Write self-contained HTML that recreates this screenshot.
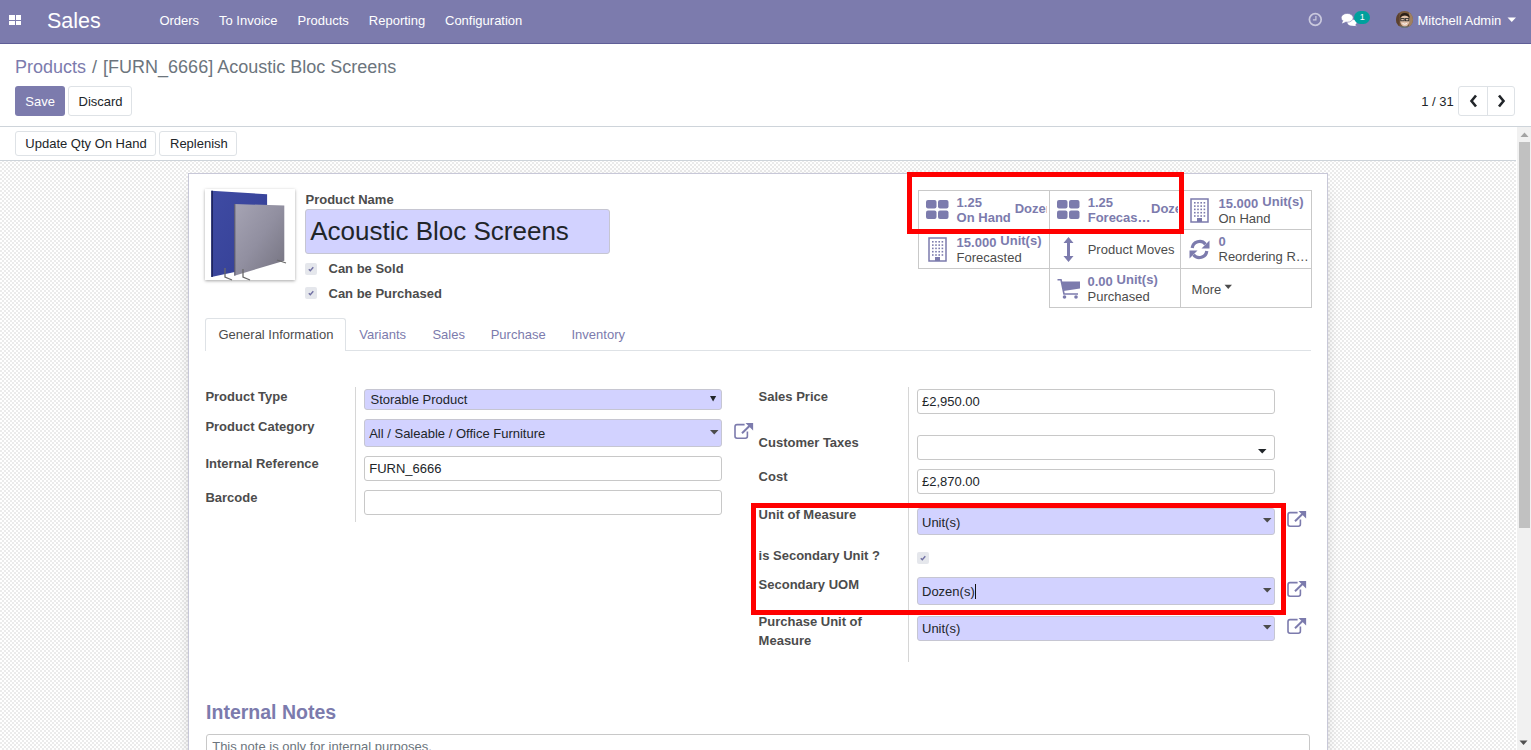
<!DOCTYPE html>
<html><head><meta charset="utf-8"><style>
html,body{margin:0;padding:0;width:1531px;height:750px;overflow:hidden;background:#fff;}
body{position:relative;font-family:"Liberation Sans",sans-serif;}
.t{position:absolute;white-space:pre;}
.r{position:absolute;}
svg.r{overflow:visible;}
</style></head><body>
<div class="r" style="left:0px;top:0px;width:1531px;height:43px;background:#7C7BAD;"></div>
<div class="r" style="left:0px;top:43px;width:1531px;height:1px;background:#5f5e97;"></div>
<div class="r" style="left:9px;top:15px;width:5.5px;height:4.5px;background:#fff;"></div>
<div class="r" style="left:15.5px;top:15px;width:5.5px;height:4.5px;background:#fff;"></div>
<div class="r" style="left:9px;top:20.5px;width:5.5px;height:4.5px;background:#fff;"></div>
<div class="r" style="left:15.5px;top:20.5px;width:5.5px;height:4.5px;background:#fff;"></div>
<div class="t" style="left:47px;top:8.15px;font-size:21.5px;line-height:26px;font-weight:400;color:#fff;">Sales</div>
<div class="t" style="left:159.4px;top:13.09px;font-size:13px;line-height:16px;font-weight:400;color:#fff;">Orders</div>
<div class="t" style="left:219px;top:13.09px;font-size:13px;line-height:16px;font-weight:400;color:#fff;">To Invoice</div>
<div class="t" style="left:297.5px;top:13.09px;font-size:13px;line-height:16px;font-weight:400;color:#fff;">Products</div>
<div class="t" style="left:368.8px;top:13.09px;font-size:13px;line-height:16px;font-weight:400;color:#fff;">Reporting</div>
<div class="t" style="left:445px;top:13.09px;font-size:13px;line-height:16px;font-weight:400;color:#fff;">Configuration</div>
<svg class="r" style="left:1307px;top:11px" width="17" height="17" viewBox="0 0 17 17"><circle cx="8.3" cy="8.5" r="5.9" fill="none" stroke="#cac9de" stroke-width="1.7"/><path d="M8.9 5 V8.9 H5.9" fill="none" stroke="#cac9de" stroke-width="1.2"/></svg>
<svg class="r" style="left:1341px;top:13px" width="17" height="14" viewBox="0 0 17 14"><ellipse cx="11" cy="9.6" rx="4.6" ry="3.1" fill="#fff"/><path d="M13.2 11.5 L15.8 13.3 L11 12.5 Z" fill="#fff"/><ellipse cx="6.2" cy="4.8" rx="6" ry="4.4" fill="#fff" stroke="#7C7BAD" stroke-width="0.6"/><path d="M2.2 7.6 L0.9 10.4 L5.2 8.8 Z" fill="#fff"/></svg>
<div class="r" style="left:1354px;top:10.6px;width:16px;height:13.4px;background:#00A09D;border-radius:7px;"></div>
<div class="t" style="left:1359.8px;top:12.48px;font-size:9px;line-height:11px;font-weight:400;color:#fff;">1</div>
<svg class="r" style="left:1396px;top:11px" width="17" height="17" viewBox="0 0 17 17"><defs><clipPath id="av"><circle cx="8.5" cy="8.5" r="8.5"/></clipPath></defs><g clip-path="url(#av)"><rect width="17" height="17" fill="#7a5a3c"/><rect x="13" y="0" width="4" height="17" fill="#a08060"/><rect x="0" y="0" width="3.5" height="17" fill="#5a4030"/><ellipse cx="8.8" cy="10" rx="4.6" ry="5.8" fill="#e0c0a8"/><path d="M3.8 7 Q4 2 8.8 2 Q13.6 2 13.8 7 Q12 4.5 8.8 4.6 Q5.5 4.5 3.8 7Z" fill="#2a1e18"/><rect x="4.8" y="7.6" width="3.4" height="2.2" fill="none" stroke="#2a2a2a" stroke-width="0.9"/><rect x="9.4" y="7.6" width="3.4" height="2.2" fill="none" stroke="#2a2a2a" stroke-width="0.9"/><path d="M6.5 12.5 Q8.8 14 11 12.5" fill="none" stroke="#fff" stroke-width="0.9"/><rect x="2" y="15.5" width="13" height="3" fill="#607888"/></g></svg>
<div class="t" style="left:1417.5px;top:13.39px;font-size:13px;line-height:16px;font-weight:400;color:#fff;">Mitchell Admin</div>
<svg class="r" style="left:1507px;top:17px" width="10" height="6" viewBox="0 0 10 6"><path d="M0.5 0.5 H9 L4.75 5Z" fill="#fff"/></svg>
<div class="r" style="left:0px;top:44px;width:1531px;height:83px;background:#fff;"></div>
<div class="r" style="left:0px;top:126px;width:1531px;height:1px;background:#ced4da;"></div>
<div class="t" style="left:15px;top:56.26px;font-size:18px;line-height:22px;font-weight:400;color:#7C7BAD;">Products</div>
<div class="t" style="left:92.1px;top:56.26px;font-size:18px;line-height:22px;font-weight:400;color:#6c757d;">/</div>
<div class="t" style="left:103.1px;top:56.26px;font-size:18px;line-height:22px;font-weight:400;color:#6c757d;">[FURN_6666] Acoustic Bloc Screens</div>
<div class="r" style="left:15px;top:86px;width:50px;height:30px;background:#7C7BAD;border-radius:3px;"></div>
<div class="t" style="left:25.3px;top:94.49px;font-size:13px;line-height:16px;font-weight:400;color:#fff;">Save</div>
<div class="r" style="left:68px;top:86px;width:64px;height:30px;background:#fff;border:1px solid #dee2e6;box-sizing:border-box;border-radius:3px;"></div>
<div class="t" style="left:78.5px;top:94.49px;font-size:13px;line-height:16px;font-weight:400;color:#212529;">Discard</div>
<div class="t" style="left:1421.2px;top:94.39px;font-size:13px;line-height:16px;font-weight:400;color:#212529;">1 / 31</div>
<div class="r" style="left:1457.8px;top:86.2px;width:57.7px;height:29.5px;background:#fff;border:1px solid #dee2e6;box-sizing:border-box;border-radius:3px;"></div>
<div class="r" style="left:1487px;top:86.2px;width:1px;height:29.5px;background:#dee2e6;"></div>
<svg class="r" style="left:1469px;top:94px" width="10" height="14" viewBox="0 0 10 14"><path d="M7 1.5 L2.5 7 L7 12.5" fill="none" stroke="#212529" stroke-width="2.6"/></svg>
<svg class="r" style="left:1496px;top:94px" width="10" height="14" viewBox="0 0 10 14"><path d="M3 1.5 L7.5 7 L3 12.5" fill="none" stroke="#212529" stroke-width="2.6"/></svg>
<div class="r" style="left:0px;top:127px;width:1516px;height:34px;background:#fff;"></div>
<div class="r" style="left:0px;top:160px;width:1516px;height:1px;background:#ced4da;"></div>
<div class="r" style="left:15px;top:131px;width:141px;height:25px;background:#fff;border:1px solid #dee2e6;box-sizing:border-box;border-radius:3px;"></div>
<div class="t" style="left:25.3px;top:136.49px;font-size:13px;line-height:16px;font-weight:400;color:#212529;">Update Qty On Hand</div>
<div class="r" style="left:159px;top:131px;width:78px;height:25px;background:#fff;border:1px solid #dee2e6;box-sizing:border-box;border-radius:3px;"></div>
<div class="t" style="left:170px;top:136.49px;font-size:13px;line-height:16px;font-weight:400;color:#212529;">Replenish</div>
<div class="r" style="left:0px;top:161px;width:1516px;height:589px;background-color:#fff;background-image:conic-gradient(#ebebeb 25%, #fff 0 50%, #ebebeb 0 75%, #fff 0);background-size:4px 4px;background-position:2px 1px;"></div>
<div class="r" style="left:1516px;top:127px;width:15px;height:623px;background:#fff;"></div>
<div class="r" style="left:1517px;top:127px;width:14px;height:623px;background:#f1f1f1;"></div>
<div class="r" style="left:1519px;top:142px;width:11px;height:386px;background:#c1c1c1;"></div>
<svg class="r" style="left:1517px;top:127px" width="15" height="15" viewBox="0 0 15 15"><path d="M3.5 10 H11.5 L7.5 5.5Z" fill="#a3a3a3"/></svg>
<svg class="r" style="left:1516px;top:735px" width="15" height="15" viewBox="0 0 15 15"><path d="M3.5 5.5 H11.5 L7.5 10Z" fill="#505050"/></svg>
<div class="r" style="left:188px;top:173px;width:1140px;height:600px;background:#fff;border:1px solid #c8c8d8;box-sizing:border-box;box-shadow:0 5px 20px -15px #000;"></div>
<div class="r" style="left:205px;top:189px;width:90px;height:91px;background:#fff;box-shadow:0 1px 3px rgba(0,0,0,0.35);"></div>
<svg class="r" style="left:205px;top:189px" width="90" height="91" viewBox="0 0 90 91"><defs><linearGradient id="bl" x1="0" y1="0" x2="1" y2="1"><stop offset="0" stop-color="#3f4ba3"/><stop offset="1" stop-color="#343f95"/></linearGradient><linearGradient id="gr" x1="0" y1="0" x2="1" y2="1"><stop offset="0" stop-color="#a6a4b4"/><stop offset="0.5" stop-color="#918fa0"/><stop offset="1" stop-color="#74727f"/></linearGradient></defs><path d="M6.3 1.7 L62.1 5.2 L62.1 76 L6.3 88 Z" fill="url(#bl)"/><path d="M6.3 1.7 L8 1.8 L8 87.7 L6.3 88 Z" fill="#1e2560"/><path d="M29.4 15.1 L79.3 16.4 L79.3 71.8 L29.4 86.7 Z" fill="url(#gr)"/><path d="M29.4 15.1 L30.3 15.1 L30.3 86.4 L29.4 86.7 Z" fill="#4a4858"/><path d="M20 79 L20 88 L27 91" stroke="#6a6a6a" stroke-width="1.3" fill="none"/><path d="M38 80 L38 88 L45 91" stroke="#6a6a6a" stroke-width="1.3" fill="none"/><path d="M72 71 L81 74" stroke="#6a6a6a" stroke-width="1.3" fill="none"/></svg>
<div class="t" style="left:305.5px;top:191.99px;font-size:13px;line-height:16px;font-weight:700;color:#4c4c4c;">Product Name</div>
<div class="r" style="left:305px;top:209px;width:305px;height:44.5px;background:#d2d2ff;border:1px solid #c6c6d2;box-sizing:border-box;border-radius:3px;"></div>
<div class="t" style="left:310.2px;top:216.19px;font-size:26px;line-height:31px;font-weight:400;color:#212529;">Acoustic Bloc Screens</div>
<div class="r" style="left:305px;top:263px;width:12px;height:12px;background:#e5e7ec;border-radius:2px;"></div>
<svg class="r" style="left:305px;top:263px" width="12" height="12" viewBox="0 0 12 12"><path d="M3.8 6.2 L5.3 7.7 L8.3 4.2" fill="none" stroke="#7170a3" stroke-width="1.4"/></svg>
<div class="t" style="left:328.5px;top:261.19px;font-size:13px;line-height:16px;font-weight:700;color:#4c4c4c;">Can be Sold</div>
<div class="r" style="left:305px;top:287px;width:12px;height:12px;background:#e5e7ec;border-radius:2px;"></div>
<svg class="r" style="left:305px;top:287px" width="12" height="12" viewBox="0 0 12 12"><path d="M3.8 6.2 L5.3 7.7 L8.3 4.2" fill="none" stroke="#7170a3" stroke-width="1.4"/></svg>
<div class="t" style="left:328.5px;top:286.29px;font-size:13px;line-height:16px;font-weight:700;color:#4c4c4c;">Can be Purchased</div>
<div class="r" style="left:918px;top:190px;width:394px;height:1px;background:#c9c9c9;"></div>
<div class="r" style="left:918px;top:229px;width:394px;height:1px;background:#c9c9c9;"></div>
<div class="r" style="left:918px;top:268px;width:394px;height:1px;background:#c9c9c9;"></div>
<div class="r" style="left:1049px;top:307px;width:263px;height:1px;background:#c9c9c9;"></div>
<div class="r" style="left:918px;top:190px;width:1px;height:79px;background:#c9c9c9;"></div>
<div class="r" style="left:1049px;top:190px;width:1px;height:118px;background:#c9c9c9;"></div>
<div class="r" style="left:1180px;top:190px;width:1px;height:118px;background:#c9c9c9;"></div>
<div class="r" style="left:1311px;top:190px;width:1px;height:118px;background:#c9c9c9;"></div>
<svg class="r" style="left:926px;top:200px" width="23" height="19" viewBox="0 0 23 19"><rect x="0" y="0" width="10.5" height="8.5" rx="2" fill="#7C7BAD"/><rect x="12" y="0" width="10.5" height="8.5" rx="2" fill="#7C7BAD"/><rect x="0" y="10.5" width="10.5" height="8.5" rx="2" fill="#7C7BAD"/><rect x="12" y="10.5" width="10.5" height="8.5" rx="2" fill="#7C7BAD"/></svg>
<div class="t" style="left:956.6px;top:195.49px;font-size:13px;line-height:16px;font-weight:700;color:#7C7BAD;">1.25</div>
<div class="t" style="left:956.6px;top:210.29px;font-size:13px;line-height:16px;font-weight:700;color:#7C7BAD;">On Hand</div>
<div class="r" style="left:1014.7px;top:190px;width:32.5px;height:38px;overflow:hidden">
<div class="t" style="left:0px;top:11.49px;font-size:13px;line-height:16px;font-weight:700;color:#7C7BAD;">Dozen(s)</div>
</div>
<svg class="r" style="left:1057.3px;top:200px" width="23" height="19" viewBox="0 0 23 19"><rect x="0" y="0" width="10.5" height="8.5" rx="2" fill="#7C7BAD"/><rect x="12" y="0" width="10.5" height="8.5" rx="2" fill="#7C7BAD"/><rect x="0" y="10.5" width="10.5" height="8.5" rx="2" fill="#7C7BAD"/><rect x="12" y="10.5" width="10.5" height="8.5" rx="2" fill="#7C7BAD"/></svg>
<div class="t" style="left:1087.7px;top:195.49px;font-size:13px;line-height:16px;font-weight:700;color:#7C7BAD;">1.25</div>
<div class="t" style="left:1087.7px;top:210.49px;font-size:13px;line-height:16px;font-weight:700;color:#7C7BAD;">Forecas…</div>
<div class="r" style="left:1151px;top:190px;width:27px;height:38px;overflow:hidden">
<div class="t" style="left:0px;top:11.49px;font-size:13px;line-height:16px;font-weight:700;color:#7C7BAD;">Dozen(s)</div>
</div>
<svg class="r" style="left:1190px;top:198px" width="19" height="25" viewBox="0 0 19 25"><path d="M1 1 H18 V24 H1 Z" fill="none" stroke="#7C7BAD" stroke-width="1.5"/><rect x="4.0" y="4.0" width="1.6" height="1.6" fill="#7C7BAD"/><rect x="4.0" y="7.3" width="1.6" height="1.6" fill="#7C7BAD"/><rect x="4.0" y="10.6" width="1.6" height="1.6" fill="#7C7BAD"/><rect x="4.0" y="13.9" width="1.6" height="1.6" fill="#7C7BAD"/><rect x="4.0" y="17.2" width="1.6" height="1.6" fill="#7C7BAD"/><rect x="7.2" y="4.0" width="1.6" height="1.6" fill="#7C7BAD"/><rect x="7.2" y="7.3" width="1.6" height="1.6" fill="#7C7BAD"/><rect x="7.2" y="10.6" width="1.6" height="1.6" fill="#7C7BAD"/><rect x="7.2" y="13.9" width="1.6" height="1.6" fill="#7C7BAD"/><rect x="7.2" y="17.2" width="1.6" height="1.6" fill="#7C7BAD"/><rect x="10.4" y="4.0" width="1.6" height="1.6" fill="#7C7BAD"/><rect x="10.4" y="7.3" width="1.6" height="1.6" fill="#7C7BAD"/><rect x="10.4" y="10.6" width="1.6" height="1.6" fill="#7C7BAD"/><rect x="10.4" y="13.9" width="1.6" height="1.6" fill="#7C7BAD"/><rect x="10.4" y="17.2" width="1.6" height="1.6" fill="#7C7BAD"/><rect x="13.6" y="4.0" width="1.6" height="1.6" fill="#7C7BAD"/><rect x="13.6" y="7.3" width="1.6" height="1.6" fill="#7C7BAD"/><rect x="13.6" y="10.6" width="1.6" height="1.6" fill="#7C7BAD"/><rect x="13.6" y="13.9" width="1.6" height="1.6" fill="#7C7BAD"/><rect x="13.6" y="17.2" width="1.6" height="1.6" fill="#7C7BAD"/><rect x="7" y="20" width="5" height="4" fill="#7C7BAD"/></svg>
<div class="t" style="left:1218.5px;top:196.09px;font-size:13px;line-height:16px;font-weight:700;color:#7C7BAD;">15.000</div>
<div class="t" style="left:1262.3px;top:194.29px;font-size:13px;line-height:16px;font-weight:700;color:#7C7BAD;">Unit(s)</div>
<div class="t" style="left:1218.5px;top:210.99px;font-size:13px;line-height:16px;font-weight:400;color:#4c4c4c;">On Hand</div>
<svg class="r" style="left:928px;top:237px" width="19" height="25" viewBox="0 0 19 25"><path d="M1 1 H18 V24 H1 Z" fill="none" stroke="#7C7BAD" stroke-width="1.5"/><rect x="4.0" y="4.0" width="1.6" height="1.6" fill="#7C7BAD"/><rect x="4.0" y="7.3" width="1.6" height="1.6" fill="#7C7BAD"/><rect x="4.0" y="10.6" width="1.6" height="1.6" fill="#7C7BAD"/><rect x="4.0" y="13.9" width="1.6" height="1.6" fill="#7C7BAD"/><rect x="4.0" y="17.2" width="1.6" height="1.6" fill="#7C7BAD"/><rect x="7.2" y="4.0" width="1.6" height="1.6" fill="#7C7BAD"/><rect x="7.2" y="7.3" width="1.6" height="1.6" fill="#7C7BAD"/><rect x="7.2" y="10.6" width="1.6" height="1.6" fill="#7C7BAD"/><rect x="7.2" y="13.9" width="1.6" height="1.6" fill="#7C7BAD"/><rect x="7.2" y="17.2" width="1.6" height="1.6" fill="#7C7BAD"/><rect x="10.4" y="4.0" width="1.6" height="1.6" fill="#7C7BAD"/><rect x="10.4" y="7.3" width="1.6" height="1.6" fill="#7C7BAD"/><rect x="10.4" y="10.6" width="1.6" height="1.6" fill="#7C7BAD"/><rect x="10.4" y="13.9" width="1.6" height="1.6" fill="#7C7BAD"/><rect x="10.4" y="17.2" width="1.6" height="1.6" fill="#7C7BAD"/><rect x="13.6" y="4.0" width="1.6" height="1.6" fill="#7C7BAD"/><rect x="13.6" y="7.3" width="1.6" height="1.6" fill="#7C7BAD"/><rect x="13.6" y="10.6" width="1.6" height="1.6" fill="#7C7BAD"/><rect x="13.6" y="13.9" width="1.6" height="1.6" fill="#7C7BAD"/><rect x="13.6" y="17.2" width="1.6" height="1.6" fill="#7C7BAD"/><rect x="7" y="20" width="5" height="4" fill="#7C7BAD"/></svg>
<div class="t" style="left:956.6px;top:235.19px;font-size:13px;line-height:16px;font-weight:700;color:#7C7BAD;">15.000</div>
<div class="t" style="left:1000.3px;top:233.19px;font-size:13px;line-height:16px;font-weight:700;color:#7C7BAD;">Unit(s)</div>
<div class="t" style="left:956.6px;top:249.79px;font-size:13px;line-height:16px;font-weight:400;color:#4c4c4c;">Forecasted</div>
<svg class="r" style="left:1063px;top:237px" width="11" height="25" viewBox="0 0 11 25"><path d="M5.5 0 L10.5 6 H7 V19 H10.5 L5.5 25 L0.5 19 H4 V6 H0.5 Z" fill="#7C7BAD"/></svg>
<div class="t" style="left:1087.7px;top:242.29px;font-size:13px;line-height:16px;font-weight:400;color:#4c4c4c;">Product Moves</div>
<svg class="r" style="left:1189px;top:239px" width="21" height="21" viewBox="0 0 21 21"><path d="M3.2 9 A7.5 7.5 0 0 1 16.5 5.2" fill="none" stroke="#7C7BAD" stroke-width="3.2"/><path d="M20.5 1.5 V9.5 H12.5 Z" fill="#7C7BAD"/><path d="M17.8 12 A7.5 7.5 0 0 1 4.5 15.8" fill="none" stroke="#7C7BAD" stroke-width="3.2"/><path d="M0.5 19.5 V11.5 H8.5 Z" fill="#7C7BAD"/></svg>
<div class="t" style="left:1218.5px;top:234.09px;font-size:13px;line-height:16px;font-weight:700;color:#7C7BAD;">0</div>
<div class="t" style="left:1218.5px;top:249.19px;font-size:13px;line-height:16px;font-weight:400;color:#4c4c4c;">Reordering R…</div>
<svg class="r" style="left:1057px;top:279px" width="24" height="21" viewBox="0 0 24 21"><path d="M0.5 0.8 H4 L7 15 H21" fill="none" stroke="#7C7BAD" stroke-width="1.6"/><path d="M4.5 2.5 H23 V9.5 L6.5 12 Z" fill="#7C7BAD"/><circle cx="7.5" cy="18" r="1.8" fill="#7C7BAD"/><circle cx="19" cy="18" r="1.8" fill="#7C7BAD"/></svg>
<div class="t" style="left:1087.5px;top:273.99px;font-size:13px;line-height:16px;font-weight:700;color:#7C7BAD;">0.00</div>
<div class="t" style="left:1116.6px;top:272.19px;font-size:13px;line-height:16px;font-weight:700;color:#7C7BAD;">Unit(s)</div>
<div class="t" style="left:1087.5px;top:288.99px;font-size:13px;line-height:16px;font-weight:400;color:#4c4c4c;">Purchased</div>
<div class="t" style="left:1191.6px;top:282.49px;font-size:13px;line-height:16px;font-weight:400;color:#4c4c4c;">More</div>
<svg class="r" style="left:1224px;top:284px" width="9" height="6" viewBox="0 0 9 6"><path d="M0.5 0.8 H8 L4.25 5Z" fill="#4c4c4c"/></svg>
<div class="r" style="left:205px;top:350px;width:1106px;height:1px;background:#dee2e6;"></div>
<div class="r" style="left:205px;top:318px;width:141px;height:33px;background:#fff;border:1px solid #dee2e6;border-bottom:none;box-sizing:border-box;border-radius:3px 3px 0 0;"></div>
<div class="t" style="left:218.5px;top:327.19px;font-size:13px;line-height:16px;font-weight:400;color:#4c4c4c;">General Information</div>
<div class="t" style="left:359.3px;top:327.19px;font-size:13px;line-height:16px;font-weight:400;color:#7C7BAD;">Variants</div>
<div class="t" style="left:432.4px;top:327.19px;font-size:13px;line-height:16px;font-weight:400;color:#7C7BAD;">Sales</div>
<div class="t" style="left:490.7px;top:327.19px;font-size:13px;line-height:16px;font-weight:400;color:#7C7BAD;">Purchase</div>
<div class="t" style="left:571.5px;top:327.19px;font-size:13px;line-height:16px;font-weight:400;color:#7C7BAD;">Inventory</div>
<div class="t" style="left:205.4px;top:389.49px;font-size:13px;line-height:16px;font-weight:700;color:#4c4c4c;">Product Type</div>
<div class="t" style="left:205.4px;top:419.49px;font-size:13px;line-height:16px;font-weight:700;color:#4c4c4c;">Product Category</div>
<div class="t" style="left:205.4px;top:456.49px;font-size:13px;line-height:16px;font-weight:700;color:#4c4c4c;">Internal Reference</div>
<div class="t" style="left:205.4px;top:490.49px;font-size:13px;line-height:16px;font-weight:700;color:#4c4c4c;">Barcode</div>
<div class="r" style="left:355px;top:387px;width:1px;height:135px;background:#d6d6d6;"></div>
<div class="r" style="left:364.3px;top:389px;width:357.5px;height:20.5px;background:#d2d2ff;border:1px solid #c6c6d2;box-sizing:border-box;border-radius:3px;"></div>
<div class="t" style="left:370.5px;top:392.29px;font-size:13px;line-height:16px;font-weight:400;color:#212529;">Storable Product</div>
<svg class="r" style="left:710px;top:396px" width="7" height="6" viewBox="0 0 7 6"><path d="M0 0 H6.2 L3.1 5.6Z" fill="#212529"/></svg>
<div class="r" style="left:364.3px;top:419.2px;width:357.5px;height:27.5px;background:#d2d2ff;border:1px solid #c6c6d2;box-sizing:border-box;border-radius:3px;"></div>
<div class="t" style="left:369.2px;top:426.39px;font-size:13px;line-height:16px;font-weight:400;color:#212529;">All / Saleable / Office Furniture</div>
<svg class="r" style="left:710px;top:430px" width="9" height="5" viewBox="0 0 9 5"><path d="M0 0 H8.5 L4.25 4.5Z" fill="#4c4c4c"/></svg>
<svg class="r" style="left:734px;top:423px" width="20" height="17" viewBox="0 0 20 17"><path d="M10.6 1.6 H3 Q1 1.6 1 3.8 V13.3 Q1 15.2 3 15.2 H11.4 Q13.4 15.2 13.4 13.3 V8.4" fill="none" stroke="#7C7BAD" stroke-width="1.6"/><path d="M8 10.3 L16.2 2.3" stroke="#7C7BAD" stroke-width="2"/><path d="M11.5 0 H19.1 V7.4 Z" fill="#7C7BAD"/></svg>
<div class="r" style="left:364.3px;top:456.4px;width:357.5px;height:24.3px;background:#fff;border:1px solid #c8c8c8;box-sizing:border-box;border-radius:3px;"></div>
<div class="t" style="left:369.2px;top:461.49px;font-size:13px;line-height:16px;font-weight:400;color:#212529;">FURN_6666</div>
<div class="r" style="left:364.3px;top:490.4px;width:357.5px;height:24.3px;background:#fff;border:1px solid #c8c8c8;box-sizing:border-box;border-radius:3px;"></div>
<div class="t" style="left:758.6px;top:389.49px;font-size:13px;line-height:16px;font-weight:700;color:#4c4c4c;">Sales Price</div>
<div class="t" style="left:758.6px;top:435.49px;font-size:13px;line-height:16px;font-weight:700;color:#4c4c4c;">Customer Taxes</div>
<div class="t" style="left:758.6px;top:469.49px;font-size:13px;line-height:16px;font-weight:700;color:#4c4c4c;">Cost</div>
<div class="t" style="left:758.6px;top:507.29px;font-size:13px;line-height:16px;font-weight:700;color:#4c4c4c;">Unit of Measure</div>
<div class="t" style="left:758.6px;top:548.49px;font-size:13px;line-height:16px;font-weight:700;color:#4c4c4c;">is Secondary Unit ?</div>
<div class="t" style="left:758.6px;top:577.09px;font-size:13px;line-height:16px;font-weight:700;color:#4c4c4c;">Secondary UOM</div>
<div class="t" style="left:758.6px;top:614.49px;font-size:13px;line-height:16px;font-weight:700;color:#4c4c4c;">Purchase Unit of</div>
<div class="t" style="left:758.6px;top:633.19px;font-size:13px;line-height:16px;font-weight:700;color:#4c4c4c;">Measure</div>
<div class="r" style="left:908px;top:387px;width:1px;height:275px;background:#d6d6d6;"></div>
<div class="r" style="left:917.4px;top:389.4px;width:357.8px;height:24.2px;background:#fff;border:1px solid #c8c8c8;box-sizing:border-box;border-radius:3px;"></div>
<div class="t" style="left:922px;top:394.49px;font-size:13px;line-height:16px;font-weight:400;color:#212529;">£2,950.00</div>
<div class="r" style="left:917.4px;top:435.4px;width:357.8px;height:24.2px;background:#fff;border:1px solid #c8c8c8;box-sizing:border-box;border-radius:3px;"></div>
<svg class="r" style="left:1258px;top:449px" width="9" height="5" viewBox="0 0 9 5"><path d="M0 0 H8.5 L4.25 4.5Z" fill="#212529"/></svg>
<div class="r" style="left:917.4px;top:469.2px;width:357.8px;height:24.4px;background:#fff;border:1px solid #c8c8c8;box-sizing:border-box;border-radius:3px;"></div>
<div class="t" style="left:922px;top:474.49px;font-size:13px;line-height:16px;font-weight:400;color:#212529;">£2,870.00</div>
<div class="r" style="left:917.4px;top:508.2px;width:357.6px;height:26.5px;background:#d2d2ff;border:1px solid #c6c6d2;box-sizing:border-box;border-radius:3px;"></div>
<div class="t" style="left:922px;top:514.79px;font-size:13px;line-height:16px;font-weight:400;color:#212529;">Unit(s)</div>
<svg class="r" style="left:1263px;top:517.9px" width="9" height="5" viewBox="0 0 9 5"><path d="M0 0 H8.5 L4.25 4.5Z" fill="#4c4c4c"/></svg>
<svg class="r" style="left:1287px;top:510.8px" width="20" height="17" viewBox="0 0 20 17"><path d="M10.6 1.6 H3 Q1 1.6 1 3.8 V13.3 Q1 15.2 3 15.2 H11.4 Q13.4 15.2 13.4 13.3 V8.4" fill="none" stroke="#7C7BAD" stroke-width="1.6"/><path d="M8 10.3 L16.2 2.3" stroke="#7C7BAD" stroke-width="2"/><path d="M11.5 0 H19.1 V7.4 Z" fill="#7C7BAD"/></svg>
<div class="r" style="left:917.4px;top:577.3px;width:357.6px;height:27.7px;background:#d2d2ff;border:1px solid #c6c6d2;box-sizing:border-box;border-radius:3px;"></div>
<div class="t" style="left:922px;top:584.49px;font-size:13px;line-height:16px;font-weight:400;color:#212529;">Dozen(s)</div>
<svg class="r" style="left:1263px;top:587.5px" width="9" height="5" viewBox="0 0 9 5"><path d="M0 0 H8.5 L4.25 4.5Z" fill="#4c4c4c"/></svg>
<svg class="r" style="left:1287px;top:581px" width="20" height="17" viewBox="0 0 20 17"><path d="M10.6 1.6 H3 Q1 1.6 1 3.8 V13.3 Q1 15.2 3 15.2 H11.4 Q13.4 15.2 13.4 13.3 V8.4" fill="none" stroke="#7C7BAD" stroke-width="1.6"/><path d="M8 10.3 L16.2 2.3" stroke="#7C7BAD" stroke-width="2"/><path d="M11.5 0 H19.1 V7.4 Z" fill="#7C7BAD"/></svg>
<div class="r" style="left:917.4px;top:616.3px;width:357.6px;height:25px;background:#d2d2ff;border:1px solid #c6c6d2;box-sizing:border-box;border-radius:3px;"></div>
<div class="t" style="left:922px;top:621.39px;font-size:13px;line-height:16px;font-weight:400;color:#212529;">Unit(s)</div>
<svg class="r" style="left:1263px;top:625.2px" width="9" height="5" viewBox="0 0 9 5"><path d="M0 0 H8.5 L4.25 4.5Z" fill="#4c4c4c"/></svg>
<svg class="r" style="left:1287px;top:618px" width="20" height="17" viewBox="0 0 20 17"><path d="M10.6 1.6 H3 Q1 1.6 1 3.8 V13.3 Q1 15.2 3 15.2 H11.4 Q13.4 15.2 13.4 13.3 V8.4" fill="none" stroke="#7C7BAD" stroke-width="1.6"/><path d="M8 10.3 L16.2 2.3" stroke="#7C7BAD" stroke-width="2"/><path d="M11.5 0 H19.1 V7.4 Z" fill="#7C7BAD"/></svg>
<div class="r" style="left:975px;top:584.3px;width:1px;height:14.5px;background:#111;"></div>
<div class="r" style="left:917.3px;top:552px;width:11.5px;height:11.5px;background:#e5e7ec;border-radius:2px;"></div>
<svg class="r" style="left:917px;top:552px" width="12" height="12" viewBox="0 0 12 12"><path d="M3.8 6.2 L5.3 7.7 L8.3 4.2" fill="none" stroke="#7170a3" stroke-width="1.4"/></svg>
<div class="t" style="left:206.1px;top:701.14px;font-size:19.5px;line-height:23px;font-weight:700;color:#7C7BAD;">Internal Notes</div>
<div class="r" style="left:206px;top:734px;width:1104px;height:40px;background:#fff;border:1px solid #c8c8c8;box-sizing:border-box;border-radius:3px;"></div>
<div class="t" style="left:212.2px;top:738.99px;font-size:13px;line-height:16px;font-weight:400;color:#6c757d;">This note is only for internal purposes.</div>
<div class="r" style="left:907.3px;top:172px;width:277px;height:61.6px;border:5px solid #ff0000;box-sizing:border-box;"></div>
<div class="r" style="left:751px;top:503px;width:534.5px;height:112px;border:5px solid #ff0000;box-sizing:border-box;"></div>
</body></html>
